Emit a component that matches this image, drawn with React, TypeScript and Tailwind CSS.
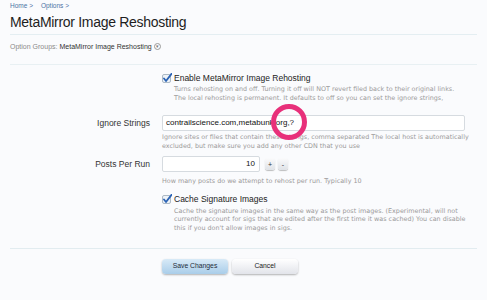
import React from 'react';

function Check() {
  return (
    <svg width="10" height="10" viewBox="0 0 10 10" className="shrink-0">
      <rect x="0.5" y="1.5" width="8" height="8" rx="1.5" fill="#eef3f8" stroke="#9aa9b8" strokeWidth="0.8" />
      <path d="M2 5.5 L4 8 L9.5 0.8" fill="none" stroke="#2b63b5" strokeWidth="1.8" strokeLinecap="round" strokeLinejoin="round" />
    </svg>
  );
}

const hint = 'text-[6.4px] leading-[8.5px] text-[#9a9a9a] font-["DejaVu_Sans",sans-serif]';

export default function App() {
  return (
    <div
      className="relative w-[487px] h-[300px] overflow-hidden bg-[#fafbfd] text-[#222]"
      style={{ fontFamily: '"Liberation Sans", Arial, sans-serif' }}
    >
      <div className="px-[10px]">
        <div className="pt-[1px] h-[9px] text-[6.5px] leading-[9px] text-[#4a74a4] flex gap-[5px]">
          <span>Home &gt;</span>
          <span className="ml-[3px]">Options &gt;</span>
        </div>
        <h1 className="mt-[4px] text-[14px] leading-[18px] tracking-[-0.3px] text-[#1e1e1e]">MetaMirror Image Reshosting</h1>
        <div className="mt-[3px] h-px bg-[#e4eef2]" />
        <div className="mt-[7px] flex items-center text-[7px] leading-[9px]">
          <span className="text-[#8a8a8a]">Option Groups:</span>
          <span className="ml-[2px] text-[#333]">MetaMirror Image Reshosting</span>
          <span className="ml-[2px] w-[7px] h-[7px] rounded-full border border-[#9a9a9a] flex items-center justify-center text-[5px] leading-none text-[#777]">▾</span>
        </div>
        <div className="mt-[13px] h-px bg-[#e8f0f3]" />

        <div className="grid grid-cols-[140px_1fr] gap-x-[12px]">
          <div />
          <div className="pt-[8px]">
            <div className="flex items-center gap-[2px] h-[10px] text-[8.5px] leading-[10px] text-[#222]">
              <Check />
              <span>Enable MetaMirror Image Rehosting</span>
            </div>
            <div className={`ml-[12px] mt-[2px] ${hint}`}>
              <div>Turns rehosting on and off. Turning it off will NOT revert filed back to their original links.</div>
              <div>The local rehosting is permanent. It defaults to off so you can set the ignore strings,</div>
            </div>
          </div>

          <div className="mt-[13px] h-[16px] flex items-center justify-end text-[8.5px] text-[#333]">Ignore Strings</div>
          <div className="mt-[13px]">
            <div className="w-[303px] h-[16px] bg-white border border-[#d6dbe0] rounded-[2px] flex items-center px-[3px] text-[8px] text-[#111]">
              contrailscience.com,metabunk.org,?
            </div>
            <div className={`mt-[2px] ${hint}`}>
              <div>Ignore sites or files that contain these strings, comma separated The local host is automatically</div>
              <div>excluded, but make sure you add any other CDN that you use</div>
            </div>
          </div>

          <div className="mt-[6px] h-[16px] flex items-center justify-end text-[8.5px] text-[#333]">Posts Per Run</div>
          <div className="mt-[6px]">
            <div className="flex items-center gap-[3px]">
              <div className="w-[98px] h-[16px] bg-white border border-[#d6dbe0] rounded-[2px] flex items-center justify-end px-[4px] text-[8px] text-[#111]">
                10
              </div>
              <div className="ml-[2px] w-[10px] h-[12px] rounded-[3px] bg-gradient-to-b from-[#fbfbfc] to-[#dfe2e7] shadow-[0_1px_1px_rgba(0,0,0,0.25)] flex items-center justify-center text-[7px] leading-none text-[#333]">+</div>
              <div className="w-[10px] h-[12px] rounded-[3px] bg-gradient-to-b from-[#fbfbfc] to-[#dfe2e7] shadow-[0_1px_1px_rgba(0,0,0,0.25)] flex items-center justify-center text-[7px] leading-none text-[#333]">-</div>
            </div>
            <div className={`mt-[5px] ${hint}`}>
              How many posts do we attempt to rehost per run. Typically 10
            </div>
          </div>

          <div />
          <div className="pt-[8px]">
            <div className="flex items-center gap-[2px] h-[10px] text-[8.5px] leading-[10px] text-[#222]">
              <Check />
              <span>Cache Signature Images</span>
            </div>
            <div className={`ml-[12px] mt-[3px] ${hint}`}>
              <div>Cache the signature images in the same way as the post images. (Experimental, will not</div>
              <div>currently account for sigs that are edited after the first time it was cached) You can disable</div>
              <div>this if you don't allow images in sigs.</div>
            </div>
          </div>
        </div>

        <div className="mt-[16px] h-px bg-[#e2ecf0]" />

        <div className="mt-[10px] ml-[152px] flex gap-[4px]">
          <button className="w-[66px] h-[15px] rounded-[4px] bg-gradient-to-b from-[#d8eaf7] to-[#a9cde9] shadow-[0_1px_2px_rgba(0,0,0,0.3)] text-[6.8px] text-[#1f2d3a]">
            Save Changes
          </button>
          <button className="w-[66px] h-[15px] rounded-[4px] bg-gradient-to-b from-[#ffffff] to-[#e2e4ea] shadow-[0_1px_2px_rgba(0,0,0,0.3)] text-[6.8px] text-[#222]">
            Cancel
          </button>
        </div>
      </div>

      <svg className="absolute left-[270px] top-[103px]" width="38" height="38" viewBox="0 0 38 38">
        <circle cx="19" cy="19" r="15.5" fill="none" stroke="#e8307a" strokeWidth="5" />
      </svg>
    </div>
  );
}
